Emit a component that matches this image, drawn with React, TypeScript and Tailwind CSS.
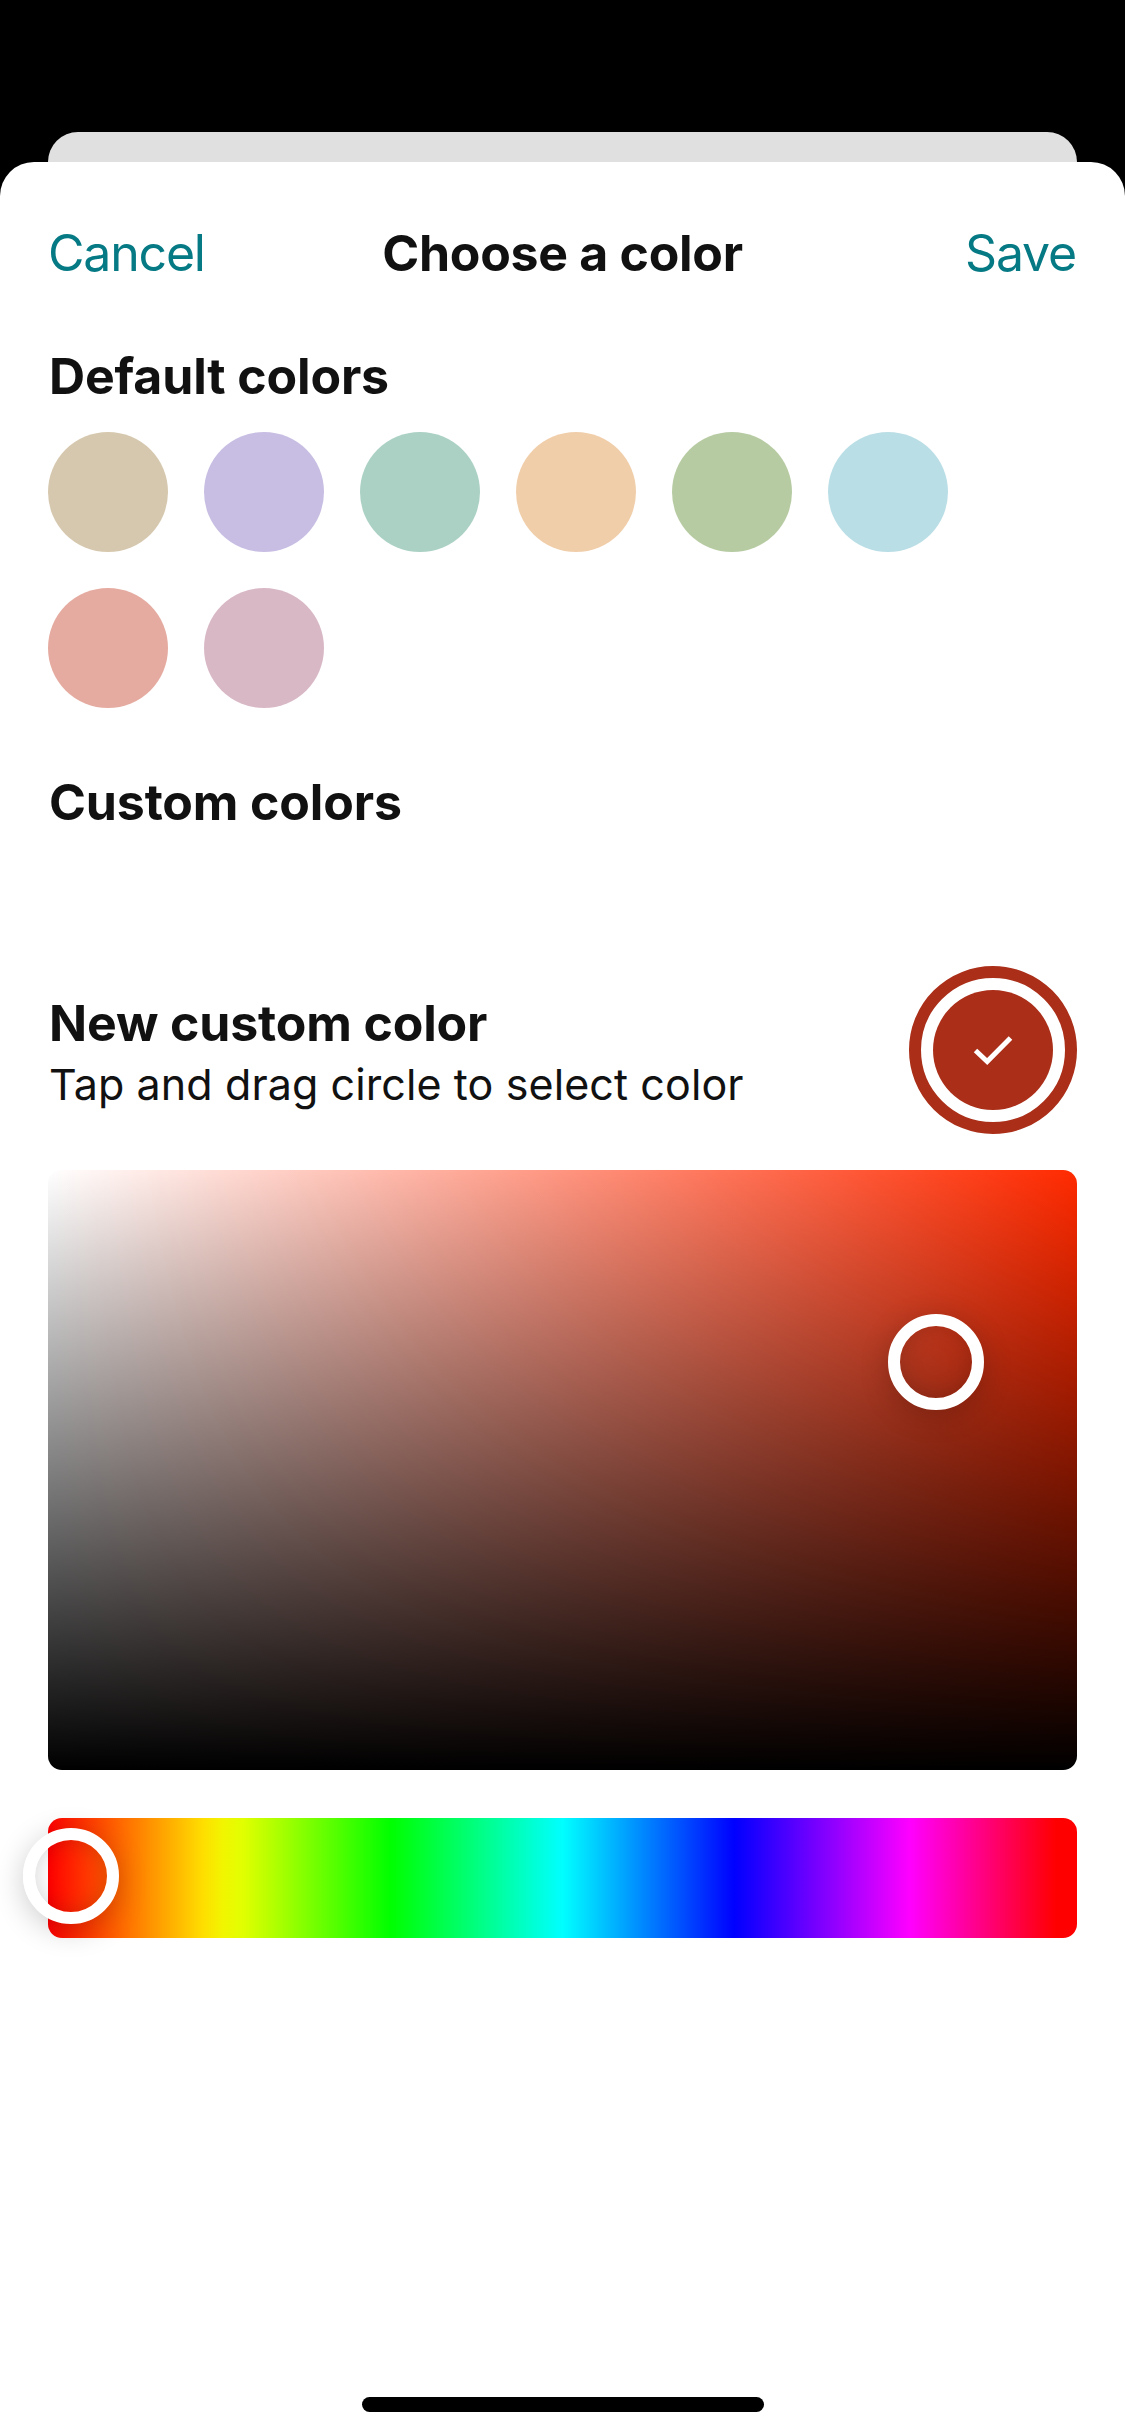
import type { CSSProperties } from "react";

const defaultColors = [
  "#d6c8ae",
  "#c8bee3",
  "#abd1c5",
  "#f1ceaa",
  "#b7cba3",
  "#b9dee6",
  "#e5aba0",
  "#d9b8c5",
];

const selectedColor = "#aa2e18";

function Swatch({ color }: { color: string }) {
  return <button className="size-30 rounded-full" style={{ backgroundColor: color }} />;
}

function Handle({ style }: { style: CSSProperties }) {
  return (
    <div
      className="absolute size-24 -translate-x-1/2 -translate-y-1/2 rounded-full border-12 border-white shadow-[0_6px_30px_rgba(0,0,0,0.2),inset_0_0_22px_rgba(0,0,0,0.16)]"
      style={style}
    />
  );
}

function Title({ children }: { children: string }) {
  return <h2 className="pl-px text-[50px] leading-16 font-bold tracking-[-0.15px]">{children}</h2>;
}

function Header() {
  return (
    <header className="flex h-[182px] items-center justify-between text-[50px]">
      <button className="w-60 text-left tracking-[-1.2px] text-[#067a84]">Cancel</button>
      <h1 className="font-bold tracking-[-0.3px]">Choose a color</h1>
      <button className="w-60 pr-px text-right tracking-[-1.2px] text-[#067a84]">Save</button>
    </header>
  );
}

function App() {
  return (
    <div className="flex h-[2436px] w-[1125px] flex-col overflow-hidden bg-black pt-33 font-['Inter',sans-serif] text-[#111]">
      <div className="mx-12 h-7.5 rounded-t-[30px] bg-[#e0e0e0]" />
      <main className="flex flex-1 flex-col rounded-t-[34px] bg-white px-12">
        <Header />

        <Title>Default colors</Title>
        <div className="mt-6 flex flex-wrap gap-9 pr-24">
          {defaultColors.map((color) => (
            <Swatch key={color} color={color} />
          ))}
        </div>

        <div className="mt-[62px]">
          <Title>Custom colors</Title>
        </div>

        <section className="mt-33 flex items-center justify-between">
          <div className="pt-1">
            <Title>New custom color</Title>
            <p className="pl-px text-[43px] leading-[58px] tracking-[0.1px]">Tap and drag circle to select color</p>
          </div>
          <button
            className="flex size-42 items-center justify-center rounded-full border-12 bg-white"
            style={{ borderColor: selectedColor }}
          >
            <span
              className="flex size-30 items-center justify-center rounded-full"
              style={{ backgroundColor: selectedColor }}
            >
              <svg className="h-[30px] w-10" viewBox="0 0 40 30" fill="none" stroke="#fff" strokeWidth="5">
                <path d="M2.5 15.5 L14.2 26.5 L37.5 3" />
              </svg>
            </span>
          </button>
        </section>

        <div className="relative mt-9 h-[600px] rounded-[14px] bg-[linear-gradient(to_top,#000,transparent),linear-gradient(to_right,#fff,#ff2a00)]">
          <Handle style={{ left: 888, top: 192 }} />
        </div>

        <div className="relative mt-12 h-30 rounded-[14px] bg-[linear-gradient(to_right,#f00,#fd0_15%,#f2f500_17%,#e0ff00_19%,#0f0_33.3%,#0ff_50%,#00f_66.7%,#f0f_83.8%,#f00_98%)]">
          <Handle style={{ left: 23, top: 58 }} />
        </div>

        <div className="mx-auto mt-auto mb-6 h-[15px] w-[402px] rounded-full bg-black" />
      </main>
    </div>
  );
}

export default App;
